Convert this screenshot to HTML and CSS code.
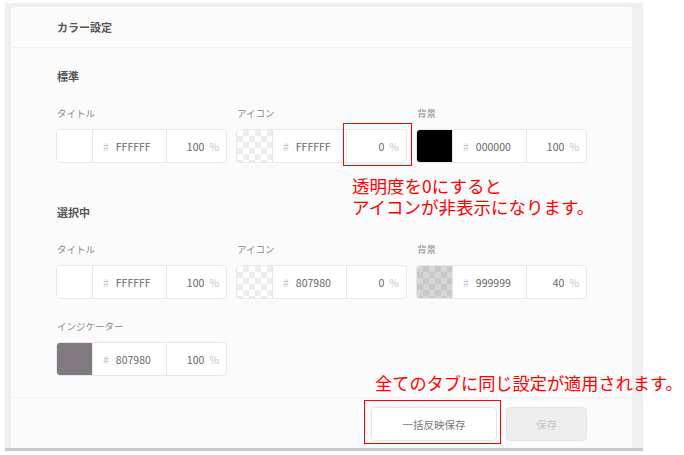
FILE: index.html
```html
<!DOCTYPE html>
<html lang="ja">
<head>
  <meta charset="UTF-8" />
  <meta name="viewport" content="width=device-width, initial-scale=1.0" />
  <title>カラー設定</title>
  <link rel="stylesheet" href="styles.css">
</head>
<body>
  <div class="page">
    <div class="shot">
      <div class="card">
        <div class="card-header">カラー設定</div>

        <div class="card-body">
          <div class="group-title">標準</div>
          <div class="row">
            <div class="field">
              <div class="field-label">タイトル</div>
              <div class="color-input">
                <div class="swatch white"></div>
                <div class="hex"><span class="mark">#</span>FFFFFF</div>
                <div class="alpha">100<span class="mark">%</span></div>
              </div>
            </div>
            <div class="field">
              <div class="field-label">アイコン</div>
              <div class="color-input">
                <div class="swatch checker"></div>
                <div class="hex"><span class="mark">#</span>FFFFFF</div>
                <div class="alpha">0<span class="mark">%</span></div>
              </div>
            </div>
            <div class="field">
              <div class="field-label">背景</div>
              <div class="color-input">
                <div class="swatch black"></div>
                <div class="hex"><span class="mark">#</span>000000</div>
                <div class="alpha">100<span class="mark">%</span></div>
              </div>
            </div>
          </div>

          <div class="group-title second">選択中</div>
          <div class="row">
            <div class="field">
              <div class="field-label">タイトル</div>
              <div class="color-input">
                <div class="swatch white"></div>
                <div class="hex"><span class="mark">#</span>FFFFFF</div>
                <div class="alpha">100<span class="mark">%</span></div>
              </div>
            </div>
            <div class="field">
              <div class="field-label">アイコン</div>
              <div class="color-input">
                <div class="swatch checker"></div>
                <div class="hex"><span class="mark">#</span>807980</div>
                <div class="alpha">0<span class="mark">%</span></div>
              </div>
            </div>
            <div class="field">
              <div class="field-label">背景</div>
              <div class="color-input">
                <div class="swatch checker-dark"></div>
                <div class="hex"><span class="mark">#</span>999999</div>
                <div class="alpha">40<span class="mark">%</span></div>
              </div>
            </div>
          </div>
          <div class="row next">
            <div class="field">
              <div class="field-label">インジケーター</div>
              <div class="color-input">
                <div class="swatch indicator"></div>
                <div class="hex"><span class="mark">#</span>807980</div>
                <div class="alpha">100<span class="mark">%</span></div>
              </div>
            </div>
          </div>
        </div>

        <div class="card-footer">
          <button class="btn">一括反映保存</button>
          <button class="btn disabled">保存</button>
        </div>
      </div>
    </div>

    <div class="note-box box-alpha"></div>
    <div class="note-text note-alpha">透明度を0にすると<br>アイコンが非表示になります。</div>
    <div class="note-box box-bulk"></div>
    <div class="note-text note-bulk">全てのタブに同じ設定が適用されます。</div>
  </div>
</body>
</html>
```

FILE: styles.css
```css
body {
  margin: 0;
  background: #fff;
  font-family: "Noto Sans CJK JP", "Noto Sans", sans-serif;
}

.page {
  position: relative;
  width: 684px;
  height: 455px;
}

.shot {
  position: absolute;
  left: 5px;
  top: 3px;
  width: 621px;
  padding: 4px 11px 0 6px;
  background: #efefef;
  border-bottom: 3px solid #c6c9cd;
}

.card {
  background: #fbfbfb;
  border-radius: 4px 4px 0 0;
  height: 441px;
  display: flex;
  flex-direction: column;
}

.card-header {
  height: 40px;
  line-height: 40px;
  padding-left: 46px;
  font-size: 11px;
  font-weight: bold;
  color: #555;
  border-bottom: 1px solid #f1f1f1;
}

.card-body {
  padding: 20px 45px 20px 45px;
  flex: 1;
  border-bottom: 1px solid #f1f1f1;
}

.group-title {
  font-size: 11px;
  line-height: 16px;
  font-weight: bold;
  color: #555;
  padding-left: 1px;
  margin-bottom: 22px;
}

.group-title.second {
  margin-top: 41px;
}

.row {
  display: flex;
  gap: 9px;
}

.row.next {
  margin-top: 20px;
}

.field {
  width: 171px;
}

.field-label {
  font-size: 9.5px;
  line-height: 14px;
  color: #8a8a8a;
  padding-left: 1px;
  margin-bottom: 9px;
}

.color-input {
  display: flex;
  height: 32px;
  border: 1px solid #e5e7ec;
  border-radius: 4px;
  background: #fff;
  overflow: hidden;
  font-size: 10.5px;
  color: #666;
}

.swatch {
  width: 35px;
  border-right: 1px solid #e5e7ec;
}

.swatch.white { background: #fff; }
.swatch.black { background: #000; }
.swatch.indicator { background: #807980; }

.swatch.checker {
  background-color: #fff;
  background-image:
    linear-gradient(45deg, #ececec 25%, transparent 25%, transparent 75%, #ececec 75%),
    linear-gradient(45deg, #ececec 25%, transparent 25%, transparent 75%, #ececec 75%);
  background-size: 12px 12px;
  background-position: 0 0, 6px 6px;
}

.swatch.checker-dark {
  background-color: #d6d6d6;
  background-image:
    linear-gradient(45deg, #c8c8c8 25%, transparent 25%, transparent 75%, #c8c8c8 75%),
    linear-gradient(45deg, #c8c8c8 25%, transparent 25%, transparent 75%, #c8c8c8 75%);
  background-size: 12px 12px;
  background-position: 0 0, 6px 6px;
}

.hex {
  width: 74px;
  border-right: 1px solid #e5e7ec;
  display: flex;
  align-items: center;
  padding-left: 10px;
  box-sizing: border-box;
}

.hex .mark {
  margin-right: 7px;
}

.mark {
  color: #c4c4c4;
}

.alpha {
  flex: 1;
  display: flex;
  align-items: center;
  justify-content: flex-end;
  padding-right: 7px;
}

.alpha .mark {
  margin-left: 5px;
}

.card-footer {
  height: 50px;
  display: flex;
  justify-content: flex-end;
  align-items: flex-start;
  gap: 9px;
  padding: 9px 45px 0 0;
  box-sizing: border-box;
}

.btn {
  height: 34px;
  width: 126px;
  border: 1px solid #e2e4e8;
  border-radius: 4px;
  background: #fff;
  color: #777;
  font-family: inherit;
  font-size: 10.5px;
}

.btn.disabled {
  width: 81px;
  background: #eeeeee;
  border-color: #e3e3e3;
  color: #c4c4c4;
}

.note-box {
  position: absolute;
  z-index: 2;
  border: 1px solid #ff0000;
}

.box-alpha {
  left: 343px;
  top: 123px;
  width: 67px;
  height: 41px;
}

.box-bulk {
  left: 364px;
  top: 400px;
  width: 135px;
  height: 42px;
}

.note-text {
  position: absolute;
  color: #ff0000;
  font-size: 17.5px;
  line-height: 21px;
  white-space: nowrap;
}

.note-alpha {
  left: 352px;
  top: 175px;
}

.note-bulk {
  left: 375px;
  top: 372px;
  font-size: 17.2px;
}
```
